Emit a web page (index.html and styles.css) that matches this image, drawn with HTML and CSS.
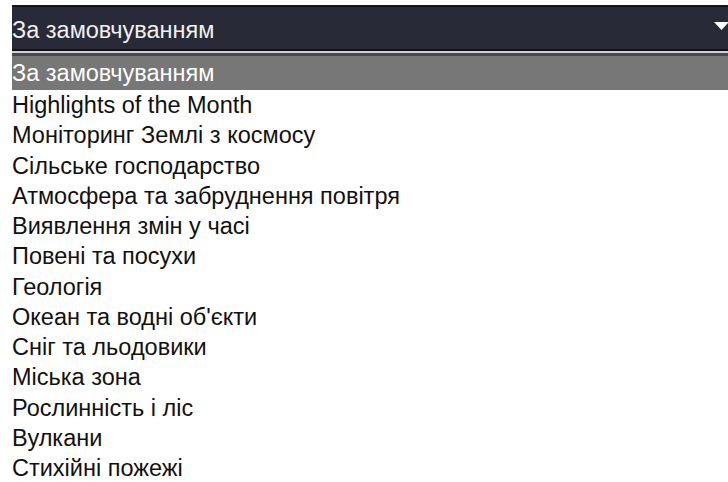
FILE: index.html
```html
<!DOCTYPE html>
<html lang="uk">
<head>
<meta charset="utf-8">
<title>Теми</title>
<link rel="stylesheet" href="styles.css">
</head>
<body>
<div class="picker">
  <div class="select">
    <span class="select-value">За замовчуванням</span>
    <svg class="select-arrow" width="15" height="8" viewBox="0 0 15 8"><path d="M0 0 H15 L7.5 8 Z" fill="#ffffff"/></svg>
  </div>
  <ul class="options">
    <li class="option is-selected">За замовчуванням</li>
    <li class="option">Highlights of the Month</li>
    <li class="option">Моніторинг Землі з космосу</li>
    <li class="option">Сільське господарство</li>
    <li class="option">Атмосфера та забруднення повітря</li>
    <li class="option">Виявлення змін у часі</li>
    <li class="option">Повені та посухи</li>
    <li class="option">Геологія</li>
    <li class="option">Океан та водні об'єкти</li>
    <li class="option">Сніг та льодовики</li>
    <li class="option">Міська зона</li>
    <li class="option">Рослинність і ліс</li>
    <li class="option">Вулкани</li>
    <li class="option">Стихійні пожежі</li>
  </ul>
</div>
</body>
</html>
```
FILE: styles.css
```css
html, body {
  margin: 0;
  background: #ffffff;
}

body {
  font-family: "Liberation Sans", Arial, sans-serif;
  overflow: hidden;
}

.picker {
  padding: 5px 0 0 12px;
}

/* closed select bar */
.select {
  display: flex;
  align-items: center;
  justify-content: space-between;
  box-sizing: border-box;
  height: 46px;
  padding-top: 4px;
  background: #292a37;
  border-top: 2px solid #151519;
  border-bottom: 2px solid #111114;
  color: #f0f0f0;
  font-size: 23.5px;
  margin-right: -1px;
}

.select-value {
  line-height: 36px;
}

.select-arrow {
  display: block;
  margin-top: -8px;
}

/* opened option list */
.options {
  list-style: none;
  margin: 0;
  padding: 0;
  border-top: 2px solid #cfcfcf;
}

.options::before {
  content: "";
  display: block;
  height: 3px;
  background: #46474f;
}

.option {
  font-size: 23.5px;
  line-height: 30.25px;
  color: #111111;
  white-space: nowrap;
}

.option.is-selected {
  background: #777777;
  color: #ffffff;
  line-height: 34px;
}
```
